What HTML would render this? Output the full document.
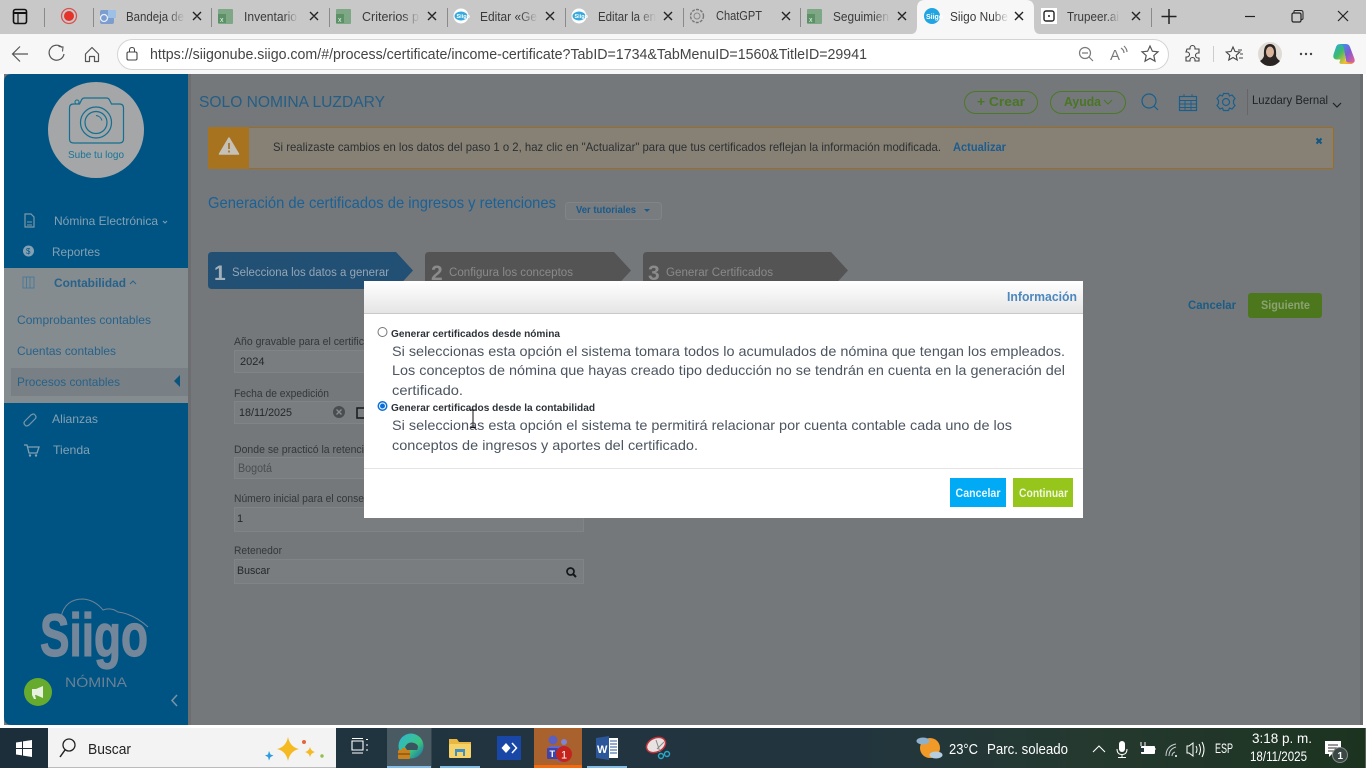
<!DOCTYPE html>
<html lang="es"><head><meta charset="utf-8"><title>Siigo Nube</title>
<style>
html,body{margin:0;padding:0;width:1366px;height:768px;overflow:hidden;background:#fff}
svg{display:block;position:absolute;left:0;top:0}
text{font-family:"Liberation Sans",sans-serif;white-space:pre}
.t{font-size:13px;fill:#3a3a3a}
.x{stroke:#222;stroke-width:1.4;fill:none}
.i{fill:none;stroke:#555;stroke-width:1.2}
.g{fill:none;stroke:#7a7a7a;stroke-width:1.2}
.l{font-size:11px;fill:#33373a}
.v{font-size:11px;fill:#24282b}
.m{font-size:12px;fill:#84a0b2}
.c{font-size:12px;fill:#27628a}
.d{font-size:14px;fill:#4c5560}
.b{font-size:10.5px;font-weight:bold;fill:#2c3238}
.h{fill:none;stroke:#1a5f8c;stroke-width:1.2}
</style></head><body>
<svg width="1366" height="768" viewBox="0 0 1366 768" xmlns="http://www.w3.org/2000/svg">
<defs>
<linearGradient id="f"><stop offset="0" stop-color="#c8c8c8" stop-opacity="0"/><stop offset="1" stop-color="#c8c8c8"/></linearGradient>
<linearGradient id="fa"><stop offset="0" stop-color="#f7f7f7" stop-opacity="0"/><stop offset="1" stop-color="#f7f7f7"/></linearGradient>
<linearGradient id="hd" x1="0" y1="0" x2="0" y2="1"><stop offset="0" stop-color="#fff"/><stop offset="1" stop-color="#e5e5e5"/></linearGradient>
<linearGradient id="tb"><stop offset="0" stop-color="#1f3340"/><stop offset=".62" stop-color="#22353f"/><stop offset=".8" stop-color="#25392f"/><stop offset="1" stop-color="#1c3320"/></linearGradient>
<linearGradient id="copa" x1="0" y1="0" x2="1" y2="1"><stop offset="0" stop-color="#2a9fe8"/><stop offset=".5" stop-color="#7d5bd6"/><stop offset="1" stop-color="#ee5f8f"/></linearGradient>
<linearGradient id="copb" x1="0" y1="0" x2="1" y2="1"><stop offset="0" stop-color="#2aa7e8"/><stop offset=".4" stop-color="#3dbb6a"/><stop offset=".75" stop-color="#f0c030"/><stop offset="1" stop-color="#f08a30"/></linearGradient>
<linearGradient id="edge" x1="0" y1="0" x2="1" y2="1"><stop offset="0" stop-color="#2db6d8"/><stop offset=".6" stop-color="#3bc47f"/><stop offset="1" stop-color="#1668b4"/></linearGradient>
</defs>

<!-- chrome -->
<rect width="1366" height="34" fill="#c8c8c8"/>
<rect y="34" width="1366" height="40" fill="#f7f7f7"/>
<path d="M911 34Q917 34 917 26V8Q917 0 925 0H1026Q1034 0 1034 8V26Q1034 34 1040 34Z" fill="#f7f7f7"/>
<rect x="13.500" y="9.500" width="13" height="14" rx="2" fill="none" stroke="#111" stroke-width="1.600"/>
<path d="M14 13H26" stroke="#111" stroke-width="2"/><path d="M18 13V23" stroke="#111" stroke-width="1.200"/>
<g stroke="#8a8a8a" stroke-width="1"><path d="M44.500 8V27M93.500 8V27M211.500 8V27M329.500 8V27M447.500 8V27M565.500 8V27M683.500 8V27M800.500 8V27M1151.500 8V27"/></g>
<circle cx="69" cy="16" r="7.500" fill="none" stroke="#d9534f" stroke-width="1.300"/><circle cx="69" cy="16" r="5" fill="#e5322b"/>

<rect x="100" y="10" width="14" height="14" rx="2" fill="#7d9dcf"/><rect x="108" y="10" width="8" height="8" fill="#9cc0e6"/><circle cx="104" cy="18" r="3.500" fill="none" stroke="#e6eefc" stroke-width="1.300"/>
<rect x="218" y="9" width="15" height="15" rx="1" fill="#7ea785"/><rect x="218" y="14" width="8" height="9" fill="#5d9067"/><text x="220" y="22" font-size="7" fill="#dfe">x</text>
<rect x="336" y="9" width="15" height="15" rx="1" fill="#7ea785"/><rect x="336" y="14" width="8" height="9" fill="#5d9067"/><text x="338" y="22" font-size="7" fill="#dfe">x</text>
<rect x="807" y="9" width="15" height="15" rx="1" fill="#7ea785"/><rect x="807" y="14" width="8" height="9" fill="#5d9067"/><text x="809" y="22" font-size="7" fill="#dfe">x</text>
<ellipse cx="461" cy="16" rx="7.500" ry="7.500" fill="#fff"/><ellipse cx="461" cy="16" rx="6.500" ry="4.500" fill="#39a9dc"/><text x="456.500" y="18" font-size="5.500" font-weight="bold" fill="#fff">Siigo</text>
<ellipse cx="579" cy="16" rx="7.500" ry="7.500" fill="#fff"/><ellipse cx="579" cy="16" rx="6.500" ry="4.500" fill="#39a9dc"/><text x="574.500" y="18" font-size="5.500" font-weight="bold" fill="#fff">Siigo</text>
<circle cx="697" cy="16" r="6.500" fill="none" stroke="#777" stroke-width="1.400" stroke-dasharray="3 1.200"/><circle cx="697" cy="16" r="3" fill="none" stroke="#888"/>
<circle cx="932" cy="16" r="8" fill="#21a5e2"/><text x="926" y="19" font-size="7" font-weight="bold" fill="#fff">Siigo</text>
<rect x="1041" y="8" width="16" height="16" fill="#fff"/><rect x="1044" y="11" width="10" height="10" rx="2" fill="none" stroke="#222" stroke-width="1.400"/><circle cx="1049" cy="16" r="1" fill="#222"/>

<g class="t">
<text x="126" y="21" textLength="58" lengthAdjust="spacingAndGlyphs">Bandeja de</text>
<text x="244" y="21" textLength="53" lengthAdjust="spacingAndGlyphs">Inventario</text>
<text x="362" y="21" textLength="57" lengthAdjust="spacingAndGlyphs">Criterios p</text>
<text x="480" y="21" textLength="57" lengthAdjust="spacingAndGlyphs">Editar «Ge</text>
<text x="598" y="21" textLength="58" lengthAdjust="spacingAndGlyphs">Editar la en</text>
<text x="716" y="20" textLength="46" lengthAdjust="spacingAndGlyphs">ChatGPT</text>
<text x="833" y="21" textLength="56" lengthAdjust="spacingAndGlyphs">Seguimien</text>
<text x="950" y="21" textLength="58" lengthAdjust="spacingAndGlyphs">Siigo Nube</text>
<text x="1067" y="21" textLength="52" lengthAdjust="spacingAndGlyphs">Trupeer.ai</text>
</g>
<rect x="168" y="8" width="17" height="18" fill="url(#f)"/><rect x="284" y="8" width="14" height="18" fill="url(#f)"/><rect x="402" y="8" width="18" height="18" fill="url(#f)"/><rect x="520" y="8" width="18" height="18" fill="url(#f)"/><rect x="638" y="8" width="18" height="18" fill="url(#f)"/><rect x="873" y="8" width="17" height="18" fill="url(#f)"/><rect x="992" y="8" width="17" height="18" fill="url(#fa)"/><rect x="1106" y="8" width="14" height="18" fill="url(#f)"/>
<path class="x" d="M193 12l8 8m0-8l-8 8M310 12l8 8m0-8l-8 8M428 12l8 8m0-8l-8 8M546 12l8 8m0-8l-8 8M664 12l8 8m0-8l-8 8M782 12l8 8m0-8l-8 8M898 12l8 8m0-8l-8 8M1015 12l8 8m0-8l-8 8M1132 12l8 8m0-8l-8 8"/>
<path d="M1169 9V24M1161.500 16.500H1176.500" stroke="#222" stroke-width="1.500"/>
<path d="M1245 16.500H1255" stroke="#222" stroke-width="1.200"/>
<rect x="1292" y="13" width="9" height="9" rx="1.500" fill="none" stroke="#222" stroke-width="1.200"/><path d="M1294 13v-1.500q0-1 1-1h6q2 0 2 2v6q0 1-1.500 1" fill="none" stroke="#222"/>
<path d="M1338 11l10 10m0-10l-10 10" stroke="#222" stroke-width="1.200"/>

<!-- toolbar -->
<path d="M28 54H13M20 46.500L12.500 54L20 61.500" fill="none" stroke="#555" stroke-width="1.200"/>
<path d="M62 47.500A7.500 7.500 0 1 0 64 54" fill="none" stroke="#555" stroke-width="1.200"/><path d="M58.500 46.500L63 47L62.500 51.500" fill="none" stroke="#555" stroke-width="1.100"/>
<path d="M85.500 54L92 47.500L98.500 54V61.500H94.500V56.500H89.500V61.500H85.500Z" fill="none" stroke="#555" stroke-width="1.200" stroke-linejoin="round"/>
<rect x="117.500" y="39.500" width="1051" height="30" rx="15" fill="#fff" stroke="#d4d4d4"/>
<rect x="127" y="52" width="10" height="8" rx="1.500" fill="none" stroke="#444" stroke-width="1.100"/><path d="M129.500 52V50q0-2.500 2.500-2.500T134.500 50v2" fill="none" stroke="#444" stroke-width="1"/>
<text x="150" y="59" font-size="14.500" fill="#444" textLength="717" lengthAdjust="spacingAndGlyphs">https://siigonube.siigo.com/#/process/certificate/income-certificate?TabID=1734&amp;TabMenuID=1560&amp;TitleID=29941</text>
<circle cx="1085" cy="53" r="5.500" class="g"/><path d="M1082 53h6M1089 57l4 4" class="g"/>
<text x="1110" y="60" font-size="15" fill="#7a7a7a">A</text><path d="M1121 48q3 2 3 5M1124 46q3 3 3 6" class="g"/>
<path d="M1150 46l2.400 5.200 5.600.6-4.200 3.800 1.200 5.600-5-2.900-5 2.900 1.200-5.600-4.200-3.800 5.600-.6z" class="i"/>
<path d="M1187 49h3v-1a2.500 2.500 0 0 1 5 0v1h4v4h-1a2.500 2.500 0 0 0 0 5h1v3h-4v-1a2.500 2.500 0 0 0-5 0v1h-4v-4h1a2.500 2.500 0 0 0 0-5h-1z" fill="none" stroke="#444" stroke-width="1.100"/>
<path d="M1213.500 46V62" stroke="#ccc"/>
<path d="M1233 47l2 4.500 4.800.5-3.600 3.300 1 4.700-4.200-2.500-4.200 2.500 1-4.700-3.600-3.300 4.800-.5z" fill="none" stroke="#444" stroke-width="1.100"/><path d="M1238 50h4M1240 54h3M1239 58h4" stroke="#444"/>
<circle cx="1270" cy="54" r="12" fill="#e0dad4"/><path d="M1260 61q3-2 4-5q-1-12 6-12q7 0 6 12q1 3 4 5q-4 5-10 5t-10-5z" fill="#2a2422"/><ellipse cx="1270" cy="52" rx="4" ry="5.500" fill="#d9b49c"/>
<circle cx="1301" cy="54" r="1.200" fill="#444"/><circle cx="1306" cy="54" r="1.200" fill="#444"/><circle cx="1311" cy="54" r="1.200" fill="#444"/>
<path d="M1340 44h6q3 0 4 3l4.500 12q1 4-3 4.500l-5-.5q-2-14-6.500-19z" fill="url(#copa)"/>
<path d="M1340 44q-3 0-4 3l-2.500 7.500q-1 4 2.500 5h4.500l-1 2.500q-.5 2 2.500 2h9q2 0 2-1.500q-4 .5-7-1l-2-13q-1-4.500-4.500-4.500z" fill="url(#copb)"/>

<!-- page -->
<rect y="74" width="1366" height="654" fill="#fff"/>
<rect x="4" y="74" width="1356" height="651" fill="#74787b"/>
<rect x="1360" y="74" width="3" height="651" fill="#6a6d6f"/>
<path d="M4 82Q4 74 12 74H188V725H12Q4 725 4 717Z" fill="#005484"/>
<rect x="188" y="74" width="3" height="651" fill="#6c6e70"/>
<rect x="4" y="268" width="184" height="135" fill="#858c90"/>
<rect x="11" y="368" width="177" height="28" fill="#788085"/>
<path d="M180 375v12l-6-6z" fill="#0a5580"/>

<circle cx="96" cy="130" r="48" fill="#a4a6a8"/>
<path d="M69.500 108q0-4 4-4h6l2-4q1-2 3-2h22q2 0 3 2l2 4h8q4 0 4 4v31q0 4-4 4H73.500q-4 0-4-4z" fill="none" stroke="#146f90" stroke-width="1.200"/>
<circle cx="96" cy="122.500" r="15.500" fill="none" stroke="#146f90" stroke-width="1.200"/><circle cx="96" cy="122.500" r="11" fill="none" stroke="#146f90" stroke-width="1.200"/><path d="M96 115.500a7 7 0 0 1 6 5" fill="none" stroke="#146f90"/><circle cx="77" cy="102" r="2" fill="#a4a6a8" stroke="#146f90"/>
<text x="68" y="158" font-size="10" fill="#187596" textLength="56" lengthAdjust="spacingAndGlyphs">Sube tu logo</text>

<path d="M25 214h6l3 3v10h-9z" fill="none" stroke="#7d98a9" stroke-width="1.200"/><path d="M27 222h5M27 225h5" stroke="#7d98a9"/>
<text class="m" x="54" y="225" textLength="104" lengthAdjust="spacingAndGlyphs">Nómina Electrónica</text><path d="M163 221l2 2 2-2" fill="none" stroke="#84a0b2"/>
<circle cx="28.500" cy="251" r="5.500" fill="#84a0b2"/><text x="26" y="254" font-size="8" fill="#005484">$</text>
<text class="m" x="52" y="256" textLength="48" lengthAdjust="spacingAndGlyphs">Reportes</text>
<rect x="23" y="277" width="11" height="11" fill="none" stroke="#4a7a98"/><path d="M26.500 277v11M30 277v11" stroke="#4a7a98"/>
<text class="c" x="54" y="287" font-weight="bold" textLength="72" lengthAdjust="spacingAndGlyphs">Contabilidad</text><path d="M130 284l3-3 3 3" fill="none" stroke="#27628a"/>
<text class="c" x="17" y="324" textLength="134" lengthAdjust="spacingAndGlyphs">Comprobantes contables</text>
<text class="c" x="17" y="355" textLength="99" lengthAdjust="spacingAndGlyphs">Cuentas contables</text>
<text class="c" x="17" y="386" textLength="103" lengthAdjust="spacingAndGlyphs">Procesos contables</text>
<path d="M25 421l6-6q3-2 4 0q2 2 0 4l-6 6q-3 2-4 0q-2-2 0-4z" fill="none" stroke="#7a96a8" stroke-width="1.200"/>
<text class="m" x="52" y="423" textLength="46" lengthAdjust="spacingAndGlyphs">Alianzas</text>
<path d="M24 445h3l2 8h8l2-6H28" fill="none" stroke="#84a0b2" stroke-width="1.300"/><circle cx="30" cy="455.500" r="1.200" fill="#84a0b2"/><circle cx="36" cy="455.500" r="1.200" fill="#84a0b2"/>
<text class="m" x="53" y="454" textLength="37" lengthAdjust="spacingAndGlyphs">Tienda</text>

<path d="M61 617q4-18 22-18q12 1 20 11q8-3 15 2q16 2 30 15" fill="none" stroke="#6f8396" stroke-width="1"/>
<text x="40" y="656" font-size="60" font-weight="bold" fill="#74879a" stroke="#74879a" stroke-width="1.200" textLength="108" lengthAdjust="spacingAndGlyphs">Siigo</text>
<text x="65" y="687" font-size="14" fill="#6a8094" textLength="62" lengthAdjust="spacingAndGlyphs">NÓMINA</text>
<circle cx="38" cy="692" r="14" fill="#66ab2e"/>
<path d="M32 689h4l7-3v12l-7-3h-1l1 4h-2l-2-4z" fill="#e8f1df"/>
<path d="M177 695l-5 5.500 5 5.500" fill="none" stroke="#7d93a5" stroke-width="1.500"/>

<text x="199" y="107" font-size="16" fill="#245e85" textLength="186" lengthAdjust="spacingAndGlyphs">SOLO NOMINA LUZDARY</text>
<rect x="964.500" y="91.500" width="73" height="22" rx="11" fill="none" stroke="#4c7826"/>
<text x="977" y="106" font-size="13" font-weight="bold" fill="#4a7524" textLength="48" lengthAdjust="spacingAndGlyphs">+ Crear</text>
<rect x="1050.500" y="91.500" width="75" height="22" rx="11" fill="none" stroke="#4c7826"/>
<text x="1064" y="106" font-size="13" font-weight="bold" fill="#4a7524" textLength="37" lengthAdjust="spacingAndGlyphs">Ayuda</text><path d="M1104 100l4 4 4-4" fill="none" stroke="#4a7524"/>
<circle cx="1149" cy="101" r="7" class="h"/><path d="M1154 106l4 4" class="h"/>
<rect x="1179.500" y="96.500" width="17" height="14" class="h"/><path d="M1179 100.500h18M1179 104h18M1179 107.500h18M1185 100v10M1191 100v10M1184 94v3M1192 94v3" class="h" style="stroke-width:.9"/>
<circle cx="1226" cy="102" r="3.500" class="h"/><path d="M1223.500 93.500h5l1 2.500 2.500-1 3 3.500-1.500 2v3l1.500 2-3 3.500-2.500-1-1 2.500h-5l-1-2.500-2.500 1-3-3.500 1.500-2v-3l-1.500-2 3-3.500 2.500 1z" class="h"/>
<path d="M1247.500 89V115" stroke="#666"/>
<text x="1252" y="104" font-size="12" fill="#1e2225" textLength="76" lengthAdjust="spacingAndGlyphs">Luzdary Bernal</text><path d="M1333 103l4 4 4-4" fill="none" stroke="#1e2225" stroke-width="1.200"/>

<rect x="208.500" y="127.500" width="1125" height="41" rx="2" fill="#878175" stroke="#a06d20"/>
<path d="M208 129q0-2 2-2h39v42h-39q-2 0-2-2z" fill="#a8731f"/>
<path d="M229 138l9.500 16h-19z" fill="#c6c1b7" stroke="#c6c1b7" stroke-linejoin="round" stroke-width="1.500"/><path d="M229 143v6M229 150.500v2" stroke="#a06d1f" stroke-width="1.600"/>
<text x="273" y="151" font-size="12" fill="#2b2f32" textLength="668" lengthAdjust="spacingAndGlyphs">Si realizaste cambios en los datos del paso 1 o 2, haz clic en "Actualizar" para que tus certificados reflejan la información modificada.</text>
<text x="953" y="151" font-size="12" font-weight="bold" fill="#1c5c8f" textLength="53" lengthAdjust="spacingAndGlyphs">Actualizar</text>
<path d="M1316.500 138.500l5 5m0-5l-5 5" stroke="#0e5685" stroke-width="2"/>

<text x="208" y="208" font-size="16" fill="#1a6196" textLength="348" lengthAdjust="spacingAndGlyphs">Generación de certificados de ingresos y retenciones</text>
<rect x="565.500" y="202.500" width="96" height="17" rx="3" fill="#787c7f" stroke="#808487"/>
<text x="576" y="213" font-size="10.500" font-weight="bold" fill="#1a5a8a" textLength="60" lengthAdjust="spacingAndGlyphs">Ver tutoriales</text><path d="M644 209h6l-3 3z" fill="#1a5a8a"/>

<path d="M212 252H396L413 270.500L396 289H212q-4 0-4-4V256q0-4 4-4z" fill="#224f74"/>
<path d="M429 252H614L631 270.500L614 289H425V256q0-4 4-4z" fill="#545454"/>
<path d="M647 252H831L848 270.500L831 289H643V256q0-4 4-4z" fill="#545454"/>
<text x="214" y="280" font-size="21" font-weight="bold" fill="#a3b0ba">1</text>
<text x="232" y="276" font-size="11.500" fill="#94a6b4" textLength="157" lengthAdjust="spacingAndGlyphs">Selecciona los datos a generar</text>
<text x="431" y="280" font-size="21" font-weight="bold" fill="#8b8b8b">2</text>
<text x="449" y="276" font-size="11.500" fill="#8a8a8a" textLength="124" lengthAdjust="spacingAndGlyphs">Configura los conceptos</text>
<text x="648" y="280" font-size="21" font-weight="bold" fill="#8b8b8b">3</text>
<text x="666" y="276" font-size="11.500" fill="#8a8a8a" textLength="107" lengthAdjust="spacingAndGlyphs">Generar Certificados</text>

<text x="1188" y="309" font-size="12" font-weight="bold" fill="#1c5c85" textLength="48" lengthAdjust="spacingAndGlyphs">Cancelar</text>
<rect x="1248" y="293" width="74" height="25" rx="3" fill="#4c771c"/>
<text x="1261" y="309" font-size="12" font-weight="bold" fill="#8ba272" textLength="49" lengthAdjust="spacingAndGlyphs">Siguiente</text>

<g fill="#797d80" stroke="#808487">
<rect x="234.500" y="350.500" width="349" height="22"/>
<rect x="234.500" y="401.500" width="349" height="22"/>
<rect x="234.500" y="457.500" width="349" height="21"/>
<rect x="234.500" y="507.500" width="349" height="24"/>
<rect x="234.500" y="559.500" width="349" height="24"/>
</g>
<text class="l" x="234" y="345" textLength="130" lengthAdjust="spacingAndGlyphs">Año gravable para el certific</text>
<text class="v" x="240" y="365">2024</text>
<text class="l" x="234" y="397" textLength="95" lengthAdjust="spacingAndGlyphs">Fecha de expedición</text>
<text class="v" x="239" y="416" textLength="53" lengthAdjust="spacingAndGlyphs">18/11/2025</text>
<circle cx="339" cy="412" r="6" fill="#4a4d50"/><path d="M336.500 409.500l5 5m0-5l-5 5" stroke="#8a8d90" stroke-width="1.300"/>
<rect x="357" y="408" width="8" height="10" fill="none" stroke="#17191b" stroke-width="1.500"/>
<text class="l" x="234" y="453" textLength="130" lengthAdjust="spacingAndGlyphs">Donde se practicó la retenci</text>
<text x="238" y="472" font-size="11.500" fill="#4a4e51" textLength="34" lengthAdjust="spacingAndGlyphs">Bogotá</text>
<text class="l" x="234" y="502" textLength="130" lengthAdjust="spacingAndGlyphs">Número inicial para el conse</text>
<text class="v" x="237" y="522">1</text>
<text class="l" x="234" y="554" textLength="48" lengthAdjust="spacingAndGlyphs">Retenedor</text>
<text class="v" x="237" y="574" textLength="33" lengthAdjust="spacingAndGlyphs">Buscar</text>
<circle cx="570.500" cy="571.500" r="3.500" fill="none" stroke="#15181a" stroke-width="1.700"/><path d="M573 574l3 3" stroke="#15181a" stroke-width="2"/>

<!-- dialog -->
<rect x="364" y="281" width="719" height="237" fill="#fff"/>
<rect x="364" y="281" width="719" height="32" fill="url(#hd)"/>
<path d="M364 313.500H1083" stroke="#c9c9c9"/>
<path d="M364 468.500H1083" stroke="#e4e4e4"/>
<text x="1007" y="301" font-size="13" font-weight="bold" fill="#4c87bd" textLength="70" lengthAdjust="spacingAndGlyphs">Información</text>
<circle cx="382.500" cy="332" r="4.500" fill="#fff" stroke="#767676"/>
<text class="b" x="391" y="337" textLength="169" lengthAdjust="spacingAndGlyphs">Generar certificados desde nómina</text>
<text class="d" x="392" y="356" textLength="673" lengthAdjust="spacingAndGlyphs">Si seleccionas esta opción el sistema tomara todos lo acumulados de nómina que tengan los empleados.</text>
<text class="d" x="392" y="375" textLength="673" lengthAdjust="spacingAndGlyphs">Los conceptos de nómina que hayas creado tipo deducción no se tendrán en cuenta en la generación del</text>
<text class="d" x="392" y="395" textLength="71" lengthAdjust="spacingAndGlyphs">certificado.</text>
<circle cx="382.500" cy="406" r="5" fill="#0a6fdc"/><circle cx="382.500" cy="406" r="3" fill="#0a6fdc" stroke="#fff"/>
<text class="b" x="391" y="411" textLength="204" lengthAdjust="spacingAndGlyphs">Generar certificados desde la contabilidad</text>
<text class="d" x="392" y="430" textLength="620" lengthAdjust="spacingAndGlyphs">Si seleccionas esta opción el sistema te permitirá relacionar por cuenta contable cada uno de los</text>
<text class="d" x="392" y="450" textLength="306" lengthAdjust="spacingAndGlyphs">conceptos de ingresos y aportes del certificado.</text>
<rect x="950" y="478" width="56" height="29" fill="#00aaf5"/>
<text x="955.500" y="497" font-size="11.500" font-weight="bold" fill="#e6f6fe" textLength="45" lengthAdjust="spacingAndGlyphs">Cancelar</text>
<rect x="1013" y="478" width="60" height="29" fill="#96c51c"/>
<text x="1019" y="497" font-size="11.500" font-weight="bold" fill="#f0f7dc" textLength="49" lengthAdjust="spacingAndGlyphs">Continuar</text>
<path d="M473 410.500V427M470.500 410h5M470.500 427.500h5" stroke="#111" stroke-width="1"/>

<!-- taskbar -->
<rect y="728" width="1366" height="40" fill="url(#tb)"/>
<rect x="0" y="728" width="48" height="40" fill="#1c2e39"/>
<path d="M16 742.500l6-.9V748h-6zM23 741.400l9-1.400V748h-9zM16 749h6v6.400l-6-.9zM23 749h9v8l-9-1.400z" fill="#fff"/>
<rect x="48" y="728" width="288" height="40" fill="#f3f3f3"/><path d="M48 767.500H336" stroke="#bbb"/>
<circle cx="69" cy="745" r="6" fill="none" stroke="#222" stroke-width="1.300"/><path d="M65 750l-5 7" stroke="#222" stroke-width="1.500"/>
<text x="88" y="754" font-size="15" fill="#222" textLength="43" lengthAdjust="spacingAndGlyphs">Buscar</text>
<path d="M288 737q2 10 11 12q-9 2-11 12q-2-10-11-12q9-2 11-12z" fill="#f5b921"/>
<path d="M310 747q1 4 5 5q-4 1-5 5q-1-4-5-5q4-1 5-5z" fill="#f5b921"/>
<path d="M269 751l1.500 3.500 3 1-3 1.500-1.500 3.500-1-3.500-3-1.500 3-1z" fill="#2a9de0"/>
<circle cx="304" cy="742" r="2" fill="#e0683a"/><circle cx="322" cy="756" r="1.700" fill="#8fc04a"/>
<path d="M352 741h11v9h-11zM352 738.500h11M352 753h11M366 739.500h2M366 745h2M366 750h2" fill="none" stroke="#fff" stroke-width="1.100"/>
<rect x="387" y="728" width="44" height="40" fill="#495a63"/><path d="M431.500 728V768" stroke="#36444c"/>
<circle cx="411" cy="746" r="12.500" fill="url(#edge)"/><path d="M405 747q3-6 9-4t3 7h-10z" fill="#3a5560"/>
<rect x="398" y="750" width="12" height="9" rx="1" fill="#c9821e"/><rect x="402" y="748" width="4" height="2" fill="#c9821e"/><path d="M398 754h12" stroke="#6d4310"/>
<path d="M449 739h8l2 3h12v5h-22z" fill="#e8b840"/><rect x="449" y="744" width="22" height="14" rx="1" fill="#f5d368"/><path d="M455 749h10v7h-2v-4h-6v4h-2z" fill="#3f8fc4"/>
<rect x="497" y="736" width="24" height="24" fill="#1847a8"/><path d="M506 743l4.500 5-4.500 5-4.500-5z" fill="#fff"/><path d="M512 743l4.500 5-4.500 5" fill="none" stroke="#fff" stroke-width="1.500"/>
<rect x="534" y="728" width="48" height="40" fill="#a9622e"/>
<circle cx="553" cy="740" r="4.500" fill="#5a5fc0"/><circle cx="564" cy="742" r="3" fill="#7f84d8"/><path d="M548 746h17a4 4 0 0 1 4 4v5a7 7 0 0 1-14 0z" fill="#6468c8"/>
<rect x="547" y="748" width="11" height="11" rx="1" fill="#3f45a8"/><text x="549.500" y="757" font-size="9" font-weight="bold" fill="#fff">T</text>
<circle cx="564" cy="754" r="8" fill="#c4241c"/><text x="561" y="758.500" font-size="11" fill="#fff">1</text>
<path d="M596 738l13-2v24l-13-2z" fill="#2b579a"/><rect x="609" y="738" width="9" height="20" fill="#fff"/><path d="M610 741h7M610 744h7M610 747h7M610 750h7M610 753h7" stroke="#2b579a"/>
<text x="597" y="753" font-size="11" font-weight="bold" fill="#fff">W</text>
<ellipse cx="656" cy="745" rx="10" ry="7" fill="#e8e2e2" stroke="#c3343c" stroke-width="1.500" transform="rotate(-25 656 745)"/><path d="M656 740l4 12M664 742l-7 7" stroke="#888"/><circle cx="661" cy="756" r="2.500" fill="none" stroke="#2ba7c9" stroke-width="1.400"/><circle cx="667" cy="754" r="2.500" fill="none" stroke="#2ba7c9" stroke-width="1.400"/>
<g fill="#83bde6"><rect x="387" y="766" width="44" height="2"/><rect x="440" y="766" width="40" height="2"/><rect x="587" y="766" width="40" height="2"/></g>
<rect x="534" y="765" width="48" height="3" fill="#f26b0f"/>

<circle cx="930" cy="748" r="10" fill="#f19a28"/><ellipse cx="923" cy="741" rx="6.500" ry="3.500" fill="#8fb0cc"/><ellipse cx="936" cy="755" rx="6.500" ry="3.500" fill="#b7cde0"/>
<g fill="#fff" font-size="15">
<text x="949" y="754" textLength="29" lengthAdjust="spacingAndGlyphs">23°C</text>
<text x="987" y="754" textLength="81" lengthAdjust="spacingAndGlyphs">Parc. soleado</text>
</g>
<path d="M1093 752l6-6 6 6" fill="none" stroke="#fff" stroke-width="1.100"/>
<rect x="1119" y="741" width="6" height="11" rx="3" fill="#fff"/><path d="M1117 749q0 5.500 5 5.500t5-5.500M1122 755v2M1118 757.500h8" fill="none" stroke="#fff"/>
<rect x="1141" y="746" width="14" height="8" rx="1" fill="#fff"/><path d="M1141 742v4M1145 742v4M1155 749h1" stroke="#fff"/><rect x="1141" y="748" width="3" height="4" fill="#22353f"/>
<path d="M1166 756q0-10 10-12M1169 756q0-7 7-9M1172 756q0-3 3-4" fill="none" stroke="#c5cdd0"/><circle cx="1176" cy="756" r="1" fill="#fff"/>
<path d="M1187 746h2l4-3v13l-4-3h-2zM1196 746q2 3.500 0 7M1199 744q3 5.500 0 11M1202 742q4 7.500 0 15" fill="none" stroke="#fff"/>
<g fill="#fff">
<text x="1215" y="753" font-size="13.500" textLength="18" lengthAdjust="spacingAndGlyphs">ESP</text>
<text x="1252" y="743" font-size="14" textLength="60" lengthAdjust="spacingAndGlyphs">3:18 p. m.</text>
<text x="1250" y="761" font-size="14" textLength="57" lengthAdjust="spacingAndGlyphs">18/11/2025</text>
</g>
<path d="M1325 741h16v13h-9l-3 3v-3h-4z" fill="#fff"/><path d="M1328 745h10M1328 748h10M1328 751h6" stroke="#333"/>
<circle cx="1340" cy="755" r="7.500" fill="#3b4744" stroke="#848c88"/><text x="1337.500" y="759" font-size="10" font-weight="bold" fill="#fff">1</text>
<path d="M1365.500 728V768" stroke="#58665a"/>
</svg>
</body></html>
